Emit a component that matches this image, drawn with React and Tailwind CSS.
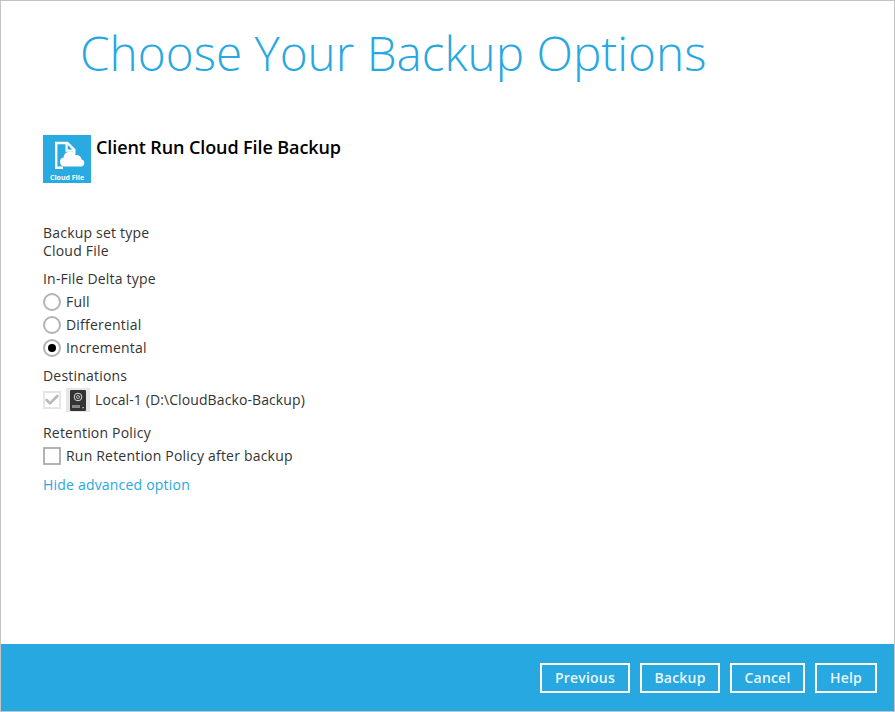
import { Check } from 'lucide-react';

function Radio({ label, checked }) {
    return (
        <label className="flex h-[23px] items-center">
            <span className="flex h-[18px] w-[18px] items-center justify-center rounded-full border-2 border-[#b3b3b3] bg-white">
                {checked && <span className="h-2 w-2 rounded-full bg-black" />}
            </span>
            <span className="ml-[5px]">{label}</span>
        </label>
    );
}

function CloudFileIcon() {
    return (
        <div className="flex h-12 w-12 flex-col items-center bg-[#29abe2] text-white">
            <svg width="48" height="38" viewBox="0 0 48 38" className="block">
                <path d="M20 32.8h-6.8V8h11.3l6.8 6.8v4.7" fill="none" stroke="#fff" strokeWidth="2.4" />
                <path d="M23.6 8v7.6h7.6" fill="none" stroke="#fff" strokeWidth="2.2" />
                <path d="M21.5 31.5a4.5 4.5 0 0 1-.9-8.9 6.2 6.2 0 0 1 11.8-2.4 5 5 0 0 1 6.2 4.4 3.5 3.5 0 0 1-.6 6.9z" fill="#fff" />
            </svg>
            <span className="text-[7px] leading-[9px] font-bold tracking-normal whitespace-nowrap">Cloud File</span>
        </div>
    );
}

function DriveIcon() {
    return (
        <div className="flex h-6 w-6 items-center justify-center bg-[#e6e6e6]">
            <svg width="16" height="21" viewBox="0 0 16 21">
                <rect width="16" height="21" rx="1" fill="#333" />
                <circle cx="8" cy="7" r="3.8" fill="none" stroke="#ddd" strokeWidth="1" />
                <circle cx="8" cy="7" r="1.5" fill="none" stroke="#ddd" strokeWidth="0.8" />
                <path d="M3 15v3M5 15v3M7 15v3M9 15v3" stroke="#ddd" strokeWidth="1" />
                <rect x="12.5" y="17" width="1.2" height="1.2" fill="#ddd" />
            </svg>
        </div>
    );
}

export default function App() {
    return (
        <div className="flex h-[712px] w-[895px] flex-col border border-[#c4c4c4] bg-white font-['Open_Sans',sans-serif] text-sm tracking-[0.2px] text-[#333]">
            <h1 className="mt-[19px] ml-[79px] h-[66px] text-[47.7px] leading-[66px] font-light tracking-normal whitespace-nowrap text-[#27a8e0]">
                Choose Your Backup Options
            </h1>

            <main className="flex-1 pl-[42px]">
                <div className="mt-[49px] flex">
                    <CloudFileIcon />
                    <h2 className="ml-[5px] text-[18px] leading-[25px] font-semibold tracking-[-0.1px] text-black">
                        Client Run Cloud File Backup
                    </h2>
                </div>

                <p className="mt-[41px] leading-[18px]">Backup set type</p>
                <p className="leading-[18px]">Cloud File</p>

                <p className="mt-[10px] leading-[18px]">In-File Delta type</p>
                <div className="mt-[2px]">
                    <Radio label="Full" />
                    <Radio label="Differential" />
                    <Radio label="Incremental" checked />
                </div>

                <p className="mt-[8px] leading-[18px]">Destinations</p>
                <div className="mt-[3px] flex h-6 items-center">
                    <span className="flex h-[18px] w-[18px] items-center justify-center border-2 border-[#e6e6e6]">
                        <Check size={16} strokeWidth={4} className="shrink-0 text-[#b9b9b9]" />
                    </span>
                    <span className="ml-[5px]"><DriveIcon /></span>
                    <span className="ml-[5px] tracking-[0.1px]">Local-1 (D:\CloudBacko-Backup)</span>
                </div>

                <p className="mt-[12px] leading-[18px]">Retention Policy</p>
                <div className="mt-[2px] flex h-[23px] items-center">
                    <span className="h-[18px] w-[18px] border-2 border-[#b3b3b3]" />
                    <span className="ml-[5px]">Run Retention Policy after backup</span>
                </div>

                <a className="mt-[9px] block leading-[18px] text-[#27a8e0]">Hide advanced option</a>
            </main>

            <footer className="flex h-[67px] items-center justify-end gap-[10px] bg-[#27a8e0] pr-[17px]">
                <button className="h-[30px] w-[90px] border-2 border-white font-semibold text-[#e9f6fc]">Previous</button>
                <button className="h-[30px] w-[80px] border-2 border-white font-semibold text-[#e9f6fc]">Backup</button>
                <button className="h-[30px] w-[75px] border-2 border-white font-semibold text-[#e9f6fc]">Cancel</button>
                <button className="h-[30px] w-[62px] border-2 border-white font-semibold text-[#e9f6fc]">Help</button>
            </footer>
        </div>
    );
}
